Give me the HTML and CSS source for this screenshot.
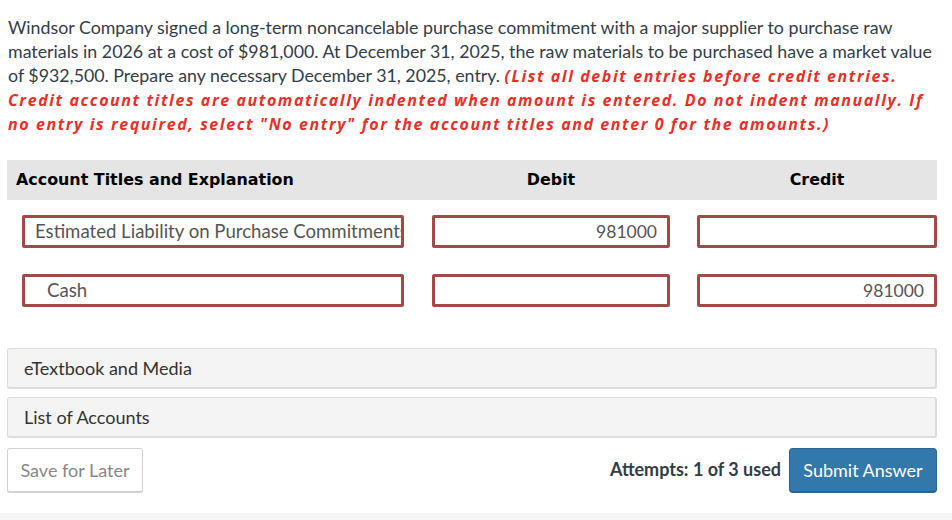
FILE: index.html
```html
<!DOCTYPE html>
<html>
<head>
<meta charset="utf-8">
<link rel="stylesheet" href="styles.css">
</head>
<body>
<div class="page">
  <p class="question">Windsor Company signed a long-term noncancelable purchase commitment with a major supplier to purchase raw materials in 2026 at a cost of $981,000. At December 31, 2025, the raw materials to be purchased have a market value of $932,500. Prepare any necessary December 31, 2025, entry. <span class="note">(List all debit entries before credit entries. Credit account titles are automatically indented when amount is entered. Do not indent manually. If no entry is required, select "No entry" for the account titles and enter 0 for the amounts.)</span></p>

  <div class="journal">
    <div class="head head-account">Account Titles and Explanation</div>
    <div class="head head-num">Debit</div>
    <div class="head head-num head-credit">Credit</div>

    <div class="cell cell-account"><div class="field">Estimated Liability on Purchase Commitments</div></div>
    <div class="cell cell-debit"><div class="field num">981000</div></div>
    <div class="cell cell-credit"><div class="field num"></div></div>

    <div class="cell cell-account row2"><div class="field indent">Cash</div></div>
    <div class="cell cell-debit row2"><div class="field num"></div></div>
    <div class="cell cell-credit row2"><div class="field num">981000</div></div>
  </div>

  <div class="panels">
    <div class="panel">eTextbook and Media</div>
    <div class="panel">List of Accounts</div>
  </div>

  <div class="actions">
    <button class="btn btn-save">Save for Later</button>
    <div class="right">
      <span class="attempts">Attempts: 1 of 3 used</span>
      <button class="btn btn-submit">Submit Answer</button>
    </div>
  </div>
</div>
<div class="footer-strip"></div>
</body>
</html>
```

FILE: styles.css
```css
html, body {
  margin: 0;
  padding: 0;
  background: #ffffff;
}
body {
  font-family: Lato, "Liberation Sans", sans-serif;
  color: #333d47;
  width: 952px;
  height: 520px;
  overflow: hidden;
  position: relative;
}
.page {
  padding: 15px 15px 0 7px;
  width: 930px;
}
.question {
  margin: 0 -6px 0 1px;
  font-size: 17.8px;
  line-height: 24px;
  color: #333d47;
}
.note {
  font-family: "Open Sans", "DejaVu Sans", sans-serif;
  font-weight: 700;
  font-style: italic;
  color: #e8302a;
  font-size: 16px;
  line-height: 18px;
  letter-spacing: 1.58px;
}
.journal {
  margin-top: 25px;
  display: grid;
  grid-template-columns: 411px 266px 253px;
}
.head {
  background: #e5e5e5;
  height: 40px;
  line-height: 40px;
  font-family: "DejaVu Sans", Verdana, sans-serif;
  font-weight: 700;
  font-size: 15.9px;
  color: #000;
}
.head-account {
  padding-left: 9px;
}
.head-num {
  text-align: center;
}
.head-credit {
  padding-left: 13px;
}
.cell {
  padding-top: 15px;
}
.cell.row2 {
  padding-top: 26px;
}
.cell-account {
  padding-left: 15px;
  padding-right: 14px;
}
.cell-debit {
  padding-left: 14px;
  padding-right: 14px;
}
.cell-credit {
  padding-left: 13px;
}
.field {
  height: 27px;
  border: 3px solid #a14b48;
  border-radius: 2px;
  font-size: 18.6px;
  line-height: 27px;
  color: #555;
  padding: 0 0 0 10px;
  white-space: nowrap;
  overflow: hidden;
}
.field.indent {
  padding-left: 22px;
}
.field.num {
  text-align: right;
  font-size: 17.5px;
  padding: 0 10px 0 0;
}
.panels {
  margin-top: 41px;
  display: flex;
  flex-direction: column;
  gap: 8px;
}
.panel {
  height: 38px;
  line-height: 38px;
  background: #f4f4f4;
  border: 1px solid #dcdcdc;
  border-width: 1px 2px 2px 1px;
  border-radius: 3px;
  padding-left: 16px;
  font-size: 18px;
  color: #333;
}
.actions {
  margin-top: 10px;
  display: flex;
  justify-content: space-between;
  align-items: center;
}
.right {
  display: flex;
  align-items: center;
  gap: 8px;
}
.btn {
  font-family: Lato, "Liberation Sans", sans-serif;
  font-size: 18px;
  height: 45px;
  border-radius: 3px;
  padding: 0;
  margin: 0;
}
.btn-save {
  width: 136px;
  background: #fff;
  border: 1px solid #d2d2d2;
  border-width: 1px 1px 2px 1px;
  color: #888;
}
.attempts {
  font-weight: 700;
  font-size: 18px;
  color: #333d47;
  position: relative;
  top: -2px;
}
.btn-submit {
  width: 148px;
  background: #3378aa;
  border: 1px solid #2a6592;
  border-width: 1px 1px 2px 1px;
  border-radius: 4px;
  color: #fff;
}
.footer-strip {
  position: absolute;
  left: 0;
  right: 0;
  top: 513px;
  height: 7px;
  background: #f6f6f6;
}
```
